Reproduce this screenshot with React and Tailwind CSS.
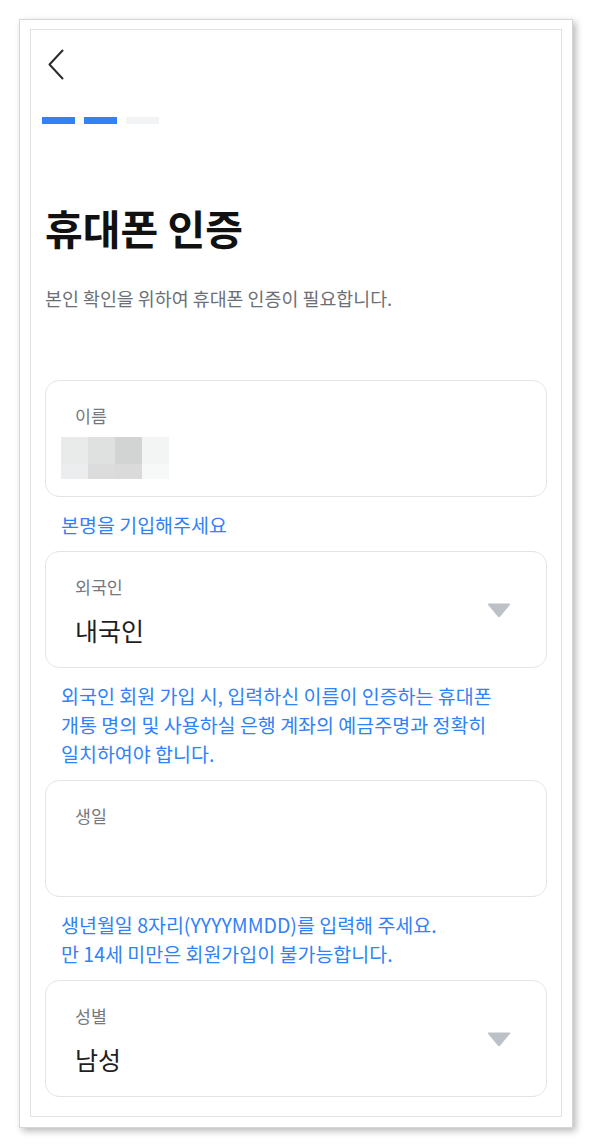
const font = { fontFamily: '"Noto Sans CJK KR", "Noto Sans", sans-serif' }

const Chevron = () => (
  <svg width="16" height="31" viewBox="0 0 16 31" fill="none">
    <path d="M14.5 1.5 L1.5 15.5 L14.5 29.5" stroke="#2b2b2b" strokeWidth="2" strokeLinecap="round" strokeLinejoin="round" />
  </svg>
)

const Caret = () => (
  <svg width="26" height="16" viewBox="0 0 26 16">
    <path d="M2.5 1.5 H23.5 Q25 1.5 24 2.8 L14.2 14.6 Q13 15.8 11.8 14.6 L2 2.8 Q1 1.5 2.5 1.5 Z" fill="#bcc1c8" />
  </svg>
)

const Blur = () => {
  const top = ['#e9eaea', '#dfe0e0', '#d2d3d3', '#f3f4f4']
  const bottom = ['#ecedee', '#dcdcdc', '#dadada', '#f7f8f8']
  return (
    <div className="mt-[10px] -ml-[14px] w-[108px]">
      <div className="flex">
        {top.map((c, i) => (
          <div key={i} className="w-[27px] h-[27px]" style={{ background: c }} />
        ))}
      </div>
      <div className="flex">
        {bottom.map((c, i) => (
          <div key={i} className="w-[27px] h-[15px]" style={{ background: c }} />
        ))}
      </div>
    </div>
  )
}

const Field = ({ label, value, select, children }) => (
  <div className="h-[117px] rounded-[14px] border border-[#e3e4e6] bg-white flex items-center justify-between pl-[29px] pr-[34px]">
    <div className="self-start pt-[24px]">
      <div className="text-[17.3px] leading-[22px] text-[#75797f]">{label}</div>
      {value && <div className="mt-[16px] text-[25px] leading-[32px] text-[#1f1f1f]">{value}</div>}
      {children}
    </div>
    {select && <Caret />}
  </div>
)

const Help = ({ lines }) => (
  <div className="pl-4 pt-[13px] pb-[12px] text-[19.5px] leading-[29px] text-[#3182f6]">
    {lines.map((l, i) => (
      <div key={i}>{l}</div>
    ))}
  </div>
)

export default function App() {
  return (
    <div className="min-h-[1147px] bg-white pt-[19px] pl-[19px]" style={font}>
      <div className="w-[554px] h-[1109px] border border-[#d6d6d6] bg-white pt-[9px] pl-[10px] pr-[10px] pb-[10px] shadow-[3px_3px_7px_rgba(0,0,0,0.28)]">
        <div className="h-[1088px] border border-[#e2e2e2] px-[14px] overflow-hidden">
          <div className="pt-[19px] pl-[3px]">
            <Chevron />
          </div>
          <div className="mt-[37px] -ml-[3px] flex gap-[9px]">
            <div className="w-[33px] h-[7px] bg-[#3182f6]" />
            <div className="w-[33px] h-[7px] bg-[#3182f6]" />
            <div className="w-[33px] h-[7px] bg-[#f1f3f5]" />
          </div>
          <h1 className="mt-[79px] text-[41px] leading-[48px] font-bold text-[#111111]">휴대폰 인증</h1>
          <p className="mt-[35px] text-[18.4px] leading-[24px] text-[#6b7076]">본인 확인을 위하여 휴대폰 인증이 필요합니다.</p>
          <div className="mt-[70px]">
            <Field label="이름">
              <Blur />
            </Field>
            <Help lines={['본명을 기입해주세요']} />
            <Field label="외국인" value="내국인" select />
            <Help
              lines={[
                '외국인 회원 가입 시, 입력하신 이름이 인증하는 휴대폰',
                '개통 명의 및 사용하실 은행 계좌의 예금주명과 정확히',
                '일치하여야 합니다.',
              ]}
            />
            <Field label="생일" />
            <Help lines={['생년월일 8자리(YYYYMMDD)를 입력해 주세요.', '만 14세 미만은 회원가입이 불가능합니다.']} />
            <Field label="성별" value="남성" select />
          </div>
        </div>
      </div>
    </div>
  )
}
